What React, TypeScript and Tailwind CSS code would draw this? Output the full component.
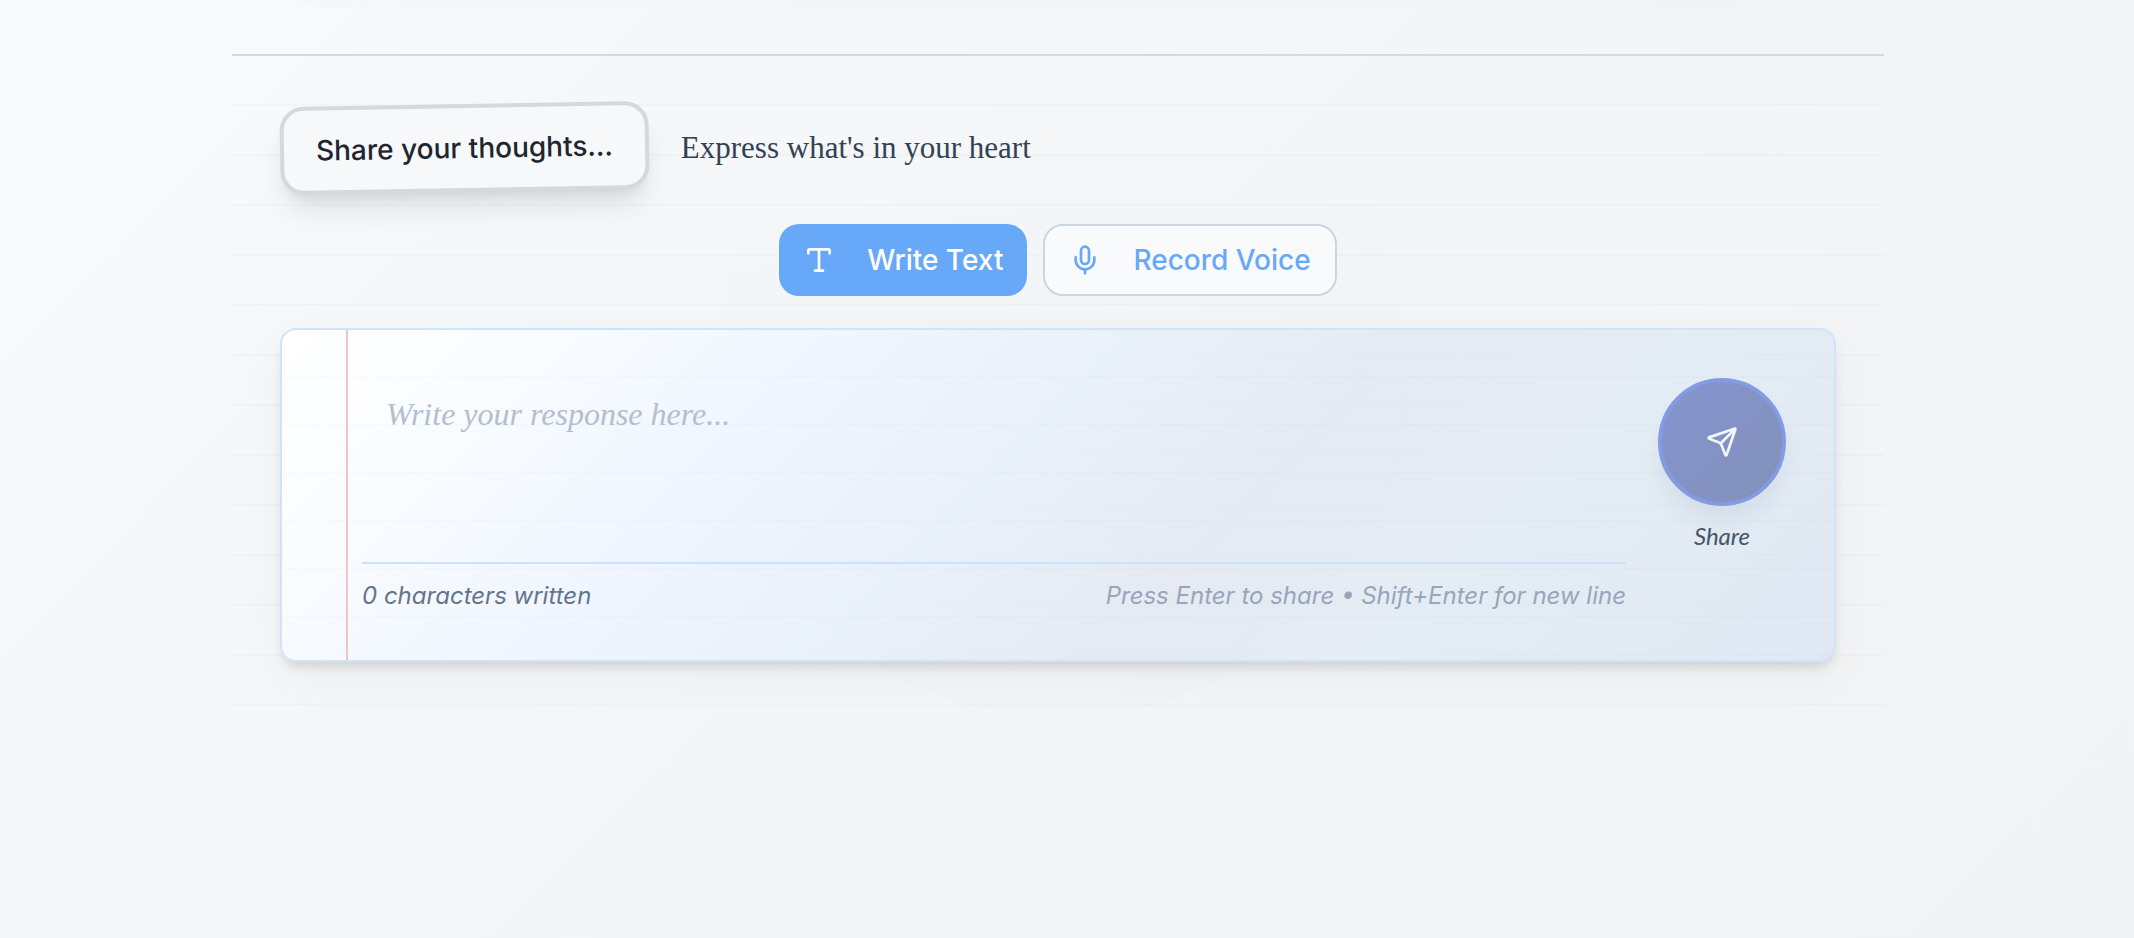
import { useState } from "react";
import { Mic, Send, Type } from "lucide-react";

export default function App() {
  const [text, setText] = useState("");

  return (
    <main className="relative min-h-screen overflow-hidden bg-[linear-gradient(135deg,#f8fafc_0%,#f5f7f8_25%,#f4f5f6_55%,#f2f3f5_100%)] pt-[54px] pr-[18px] font-['Inter',sans-serif]">
      <div className="pointer-events-none absolute -top-16 left-1/2 h-[71px] w-[1476px] max-w-full -translate-x-[780px] rounded-[32px] bg-black/[0.008]" />
      <div className="pointer-events-none absolute top-6 left-1/2 size-[694px] -translate-x-[353px] rounded-full bg-[linear-gradient(transparent_15%,rgba(0,0,0,0.007)_60%,rgba(0,0,0,0.004))]" />

      <section className="relative mx-auto w-full max-w-[1652px] border-t-2 border-[#d3d9de] bg-[repeating-linear-gradient(transparent_0px,transparent_48px,rgba(15,23,42,0.018)_48px,rgba(15,23,42,0.018)_50px)] p-12">
        <header className="mb-8 flex items-center gap-8">
          <div className="-rotate-1 rounded-[24px] border-4 border-[#d3d9de] bg-[#f7f8fa] px-8 py-6 text-[28px] leading-8 font-medium text-[#1f2630] shadow-[0_20px_30px_-6px_rgba(0,0,0,0.10),0_8px_12px_-6px_rgba(0,0,0,0.08)]">
            Share your thoughts...
          </div>
          <p className="font-['Liberation_Serif',serif] text-[31px] leading-10 text-[#334155]">
            Express what's in your heart
          </p>
        </header>

        <div className="mb-8 flex justify-center gap-4">
          <button
            type="button"
            className="flex h-[72px] items-center gap-8 rounded-[20px] bg-[#68a8f8] px-6 text-[28px] leading-10 font-medium text-white"
          >
            <Type size={32} />
            Write Text
          </button>
          <button
            type="button"
            className="flex h-[72px] items-center gap-8 rounded-[20px] border-2 border-[#cbd5e1] bg-[#f9fafc] px-6 text-[28px] leading-10 font-medium text-[#68a8f8]"
          >
            <Mic size={32} />
            Record Voice
          </button>
        </div>

        <form
          className="relative rounded-[16px] border-2 border-[#cfe3f9] bg-[repeating-linear-gradient(transparent_0px,transparent_46px,rgba(15,23,42,0.012)_46px,rgba(15,23,42,0.012)_48px),linear-gradient(135deg,#ffffff_0%,#f8fcff_15%,#f0f5ff_30%,rgba(231,240,250,0.85)_45%,rgba(225,231,242,0.75)_60%,rgba(217,231,243,0.6)_78%,rgba(205,220,242,0.5)_100%)] p-12 shadow-[0_8px_12px_-4px_rgba(0,0,0,0.14),0_16px_50px_0_rgba(0,0,0,0.04)]"
          onSubmit={(event) => event.preventDefault()}
        >
          <div className="absolute inset-y-0 left-16 w-0.5 bg-[#f3c3c5]" />
          <div className="flex gap-8 pl-8">
            <div className="flex min-w-0 flex-1 flex-col">
              <textarea
                aria-label="Your response"
                placeholder="Write your response here..."
                value={text}
                onChange={(event) => setText(event.target.value)}
                className="mb-4 h-[168px] w-full resize-none bg-transparent px-6 py-4 font-['Liberation_Serif',serif] text-[32px] leading-10 text-[#334155] outline-none placeholder:text-[#b3bfcf] placeholder:italic"
              />
              <div className="flex justify-between border-t-2 border-[#cde2f9] pt-4 text-[24px] leading-8 italic">
                <span className="text-[#64748b]">{text.length} characters written</span>
                <span className="text-[#98a5ba]">Press Enter to share • Shift+Enter for new line</span>
              </div>
            </div>
            <div className="flex flex-col items-center gap-4">
              <button
                type="submit"
                aria-label="Share"
                className="flex size-32 items-center justify-center rounded-full border-4 border-[#839be3] bg-[linear-gradient(135deg,#8595d0,#8290b8)] bg-origin-border text-[#f3f6fc] shadow-[0_16px_24px_-4px_rgba(30,50,90,0.08)]"
              >
                <Send size={32} />
              </button>
              <span className="font-['Lato',sans-serif] text-[24px] leading-7 text-[#475569] italic">Share</span>
            </div>
          </div>
        </form>
      </section>
    </main>
  );
}
